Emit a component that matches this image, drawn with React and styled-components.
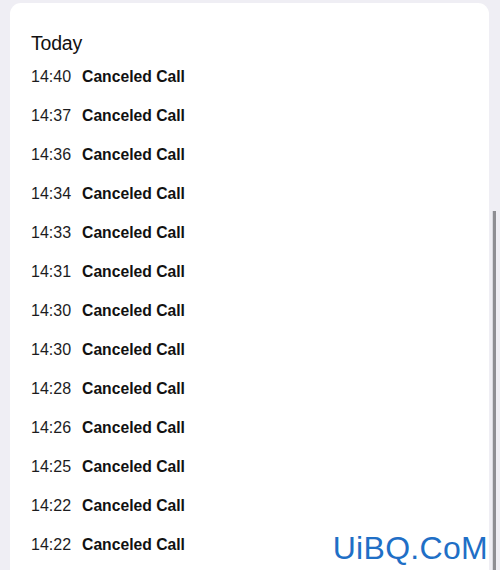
import React from 'react';
import styled, { createGlobalStyle } from 'styled-components';

const GlobalStyle = createGlobalStyle`
  html, body {
    margin: 0;
    padding: 0;
    background: #efeef4;
    overflow: hidden;
  }
  body {
    font-family: "Liberation Sans", Arial, sans-serif;
    color: #111;
  }
`;

const Screen = styled.div`
  position: relative;
  width: 500px;
  height: 570px;
  overflow: hidden;
  padding: 3px 11px 0 10px;
  box-sizing: border-box;
`;

const Card = styled.div`
  background: #fff;
  border-radius: 11px 11px 0 0;
  height: 600px;
  padding: 29px 21px 0;
  box-sizing: border-box;
`;

const Heading = styled.h2`
  margin: 0 0 3px;
  font-size: 19.5px;
  font-weight: 400;
  line-height: 22px;
  letter-spacing: -0.2px;
`;

const List = styled.ul`
  list-style: none;
  margin: 0;
  padding: 0;
`;

const Row = styled.li`
  display: flex;
  align-items: center;
  height: 39px;
  font-size: 16px;
`;

const Time = styled.span`
  font-weight: 400;
  color: #1c1c1e;
  margin-right: 11px;
`;

const Title = styled.span`
  font-weight: 700;
  font-size: 15.7px;
  color: #111;
`;

const Thumb = styled.div`
  position: absolute;
  right: 4px;
  top: 211px;
  width: 3px;
  height: 360px;
  background: #8e8e93;
  border-left: 1px solid #d8d8de;
`;

const Watermark = styled.div`
  position: absolute;
  right: 12px;
  bottom: 3px;
  font-family: "Liberation Sans", Arial, sans-serif;
  font-size: 32px;
  letter-spacing: 0.3px;
  color: #1f6fc6;
`;

const calls = [
  '14:40', '14:37', '14:36', '14:34', '14:33', '14:31', '14:30',
  '14:30', '14:28', '14:26', '14:25', '14:22', '14:22',
];

export default function App() {
  return (
    <>
      <GlobalStyle />
      <Screen>
        <Card>
          <Heading>Today</Heading>
          <List>
            {calls.map((t, i) => (
              <Row key={i}>
                <Time>{t}</Time>
                <Title>Canceled Call</Title>
              </Row>
            ))}
          </List>
        </Card>
        <Thumb />
        <Watermark>UiBQ.CoM</Watermark>
      </Screen>
    </>
  );
}
